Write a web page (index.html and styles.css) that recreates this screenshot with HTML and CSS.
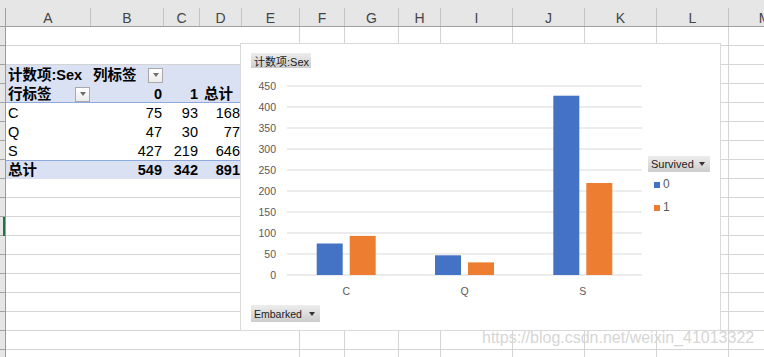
FILE: index.html
```html
<html>
	<head>
		<title>数据透视表 - Embarked / Survived</title>
		<meta charset="utf-8">
		<link rel="stylesheet" href="styles.css">
	</head>
	<body>
		<div class="sheet">
			<div class="colhead">
				<div class="corner"></div>
				<div class="letter">A</div>
				<div class="letter">B</div>
				<div class="letter">C</div>
				<div class="letter">D</div>
				<div class="letter">E</div>
				<div class="letter">F</div>
				<div class="letter">G</div>
				<div class="letter">H</div>
				<div class="letter">I</div>
				<div class="letter">J</div>
				<div class="letter">K</div>
				<div class="letter">L</div>
				<div class="letter">M</div>
			</div>

			<div class="cells">
				<div class="rowhead"><span class="active"></span></div>
				<div class="col"></div>
				<div class="col"></div>
				<div class="col"></div>
				<div class="col"></div>
				<div class="col"></div>
				<div class="col"></div>
				<div class="col"></div>
				<div class="col"></div>
				<div class="col"></div>
				<div class="col"></div>
				<div class="col"></div>
				<div class="col"></div>
				<div class="col"></div>

				<table class="pivot">
					<colgroup>
						<col class="w-a">
						<col class="w-b">
						<col class="w-c">
						<col class="w-d">
					</colgroup>
					<tr class="head">
						<th>计数项:Sex</th>
						<th><div class="field">列标签<span class="drop"></span></div></th>
						<th></th>
						<th></th>
					</tr>
					<tr class="head sub">
						<th><div class="field">行标签<span class="drop"></span></div></th>
						<th class="num">0</th>
						<th class="num">1</th>
						<th class="grand">总计</th>
					</tr>
					<tr>
						<td>C</td>
						<td class="num">75</td>
						<td class="num">93</td>
						<td class="num">168</td>
					</tr>
					<tr>
						<td>Q</td>
						<td class="num">47</td>
						<td class="num">30</td>
						<td class="num">77</td>
					</tr>
					<tr>
						<td>S</td>
						<td class="num">427</td>
						<td class="num">219</td>
						<td class="num">646</td>
					</tr>
					<tr class="total">
						<td>总计</td>
						<td class="num">549</td>
						<td class="num">342</td>
						<td class="num">891</td>
					</tr>
				</table>
			</div>

			<!-- pivot chart floats over the cells -->
			<div class="chart">
				<div class="chip title">计数项:Sex</div>
				<div class="plot-row">
					<svg class="plot" viewBox="0 0 407 228">
						<g class="gridlines">
							<line x1="46" x2="401" y1="12" y2="12" />
							<line x1="46" x2="401" y1="33" y2="33" />
							<line x1="46" x2="401" y1="54" y2="54" />
							<line x1="46" x2="401" y1="75" y2="75" />
							<line x1="46" x2="401" y1="96" y2="96" />
							<line x1="46" x2="401" y1="117" y2="117" />
							<line x1="46" x2="401" y1="138" y2="138" />
							<line x1="46" x2="401" y1="159" y2="159" />
							<line x1="46" x2="401" y1="180" y2="180" />
							<line x1="46" x2="401" y1="201" y2="201" />
						</g>
						<g class="ylabels">
							<text x="35" y="16">450</text>
							<text x="35" y="37">400</text>
							<text x="35" y="58">350</text>
							<text x="35" y="79">300</text>
							<text x="35" y="100">250</text>
							<text x="35" y="121">200</text>
							<text x="35" y="142">150</text>
							<text x="35" y="163">100</text>
							<text x="35" y="184">50</text>
							<text x="35" y="205">0</text>
						</g>
						<g class="bars">
							<rect class="s0" x="75.7" y="169.5" width="26" height="31.5" />
							<rect class="s1" x="108.7" y="161.9" width="26" height="39.1" />
							<rect class="s0" x="194" y="181.3" width="26" height="19.7" />
							<rect class="s1" x="227" y="188.4" width="26" height="12.6" />
							<rect class="s0" x="312.3" y="21.7" width="26" height="179.3" />
							<rect class="s1" x="345.3" y="109" width="26" height="92" />
						</g>
						<g class="xlabels">
							<text x="105.2" y="221">C</text>
							<text x="223.5" y="221">Q</text>
							<text x="341.8" y="221">S</text>
						</g>
					</svg>
					<div class="legend">
						<div class="chip series">Survived<span class="caret"></span></div>
						<div class="key"><span class="swatch s0"></span>0</div>
						<div class="key"><span class="swatch s1"></span>1</div>
					</div>
				</div>
				<div class="chip axis">Embarked<span class="caret"></span></div>
			</div>

			<div class="watermark">https://blog.csdn.net/weixin_41013322</div>
		</div>
	</body>
</html>
```

FILE: styles.css
```css
html, body {
	margin: 0;
	overflow: hidden;
	background: #fff;
}

.sheet {
	position: relative;
	width: 764px;
	height: 357px;
	overflow: hidden;
	font-family: "Liberation Sans", "Noto Sans CJK SC", sans-serif;
}

.colhead,
.cells {
	display: grid;
	grid-template-columns: 6px 85px 73px 36px 42px 58px 45px 54px 42px 72px 72px 72px 72px 72px;
}

/* column letters */

.colhead {
	height: 27px;
	box-sizing: border-box;
	background: #e6e6e6;
	border-bottom: 1px solid #a0a0a0;
}

.corner {
	align-self: end;
	height: 18px;
	border-right: 1px solid #a0a0a0;
}

.letter {
	align-self: end;
	height: 18px;
	line-height: 20px;
	box-sizing: border-box;
	border-right: 1px solid #c4c4c4;
	text-align: center;
	font-size: 14px;
	color: #444;
	overflow: hidden;
}

/* cell area */

.cells {
	grid-template-rows: repeat(18, 19px);
	background: repeating-linear-gradient(to bottom, #fff 0 18px, #d4d4d4 18px 19px);
}

.rowhead {
	grid-column: 1;
	grid-row: 1 / -1;
	display: flex;
	flex-direction: column;
	box-sizing: border-box;
	border-right: 1px solid #9b9b9b;
	background: repeating-linear-gradient(to bottom, #e6e6e6 0 18px, #a3a3a3 18px 19px);
}

.active {
	align-self: flex-end;
	width: 2px;
	height: 19px;
	margin-top: 190px;
	background: #217346;
}

.col {
	grid-row: 1 / -1;
	box-sizing: border-box;
	border-right: 1px solid #d4d4d4;
}

/* pivot table */

.pivot {
	grid-column: 2 / 6;
	grid-row: 3 / 9;
	width: 100%;
	border-spacing: 0;
	table-layout: fixed;
	background: #fff;
	font-size: 14.5px;
	line-height: 17px;
	color: #000;
}

.w-a { width: 85px; }
.w-b { width: 73px; }
.w-c { width: 36px; }
.w-d { width: 42px; }

.pivot th,
.pivot td {
	height: 19px;
	padding: 2px 2px 0;
	text-align: left;
	font-weight: normal;
	white-space: nowrap;
}

.pivot .head th {
	background: #d9e1f2;
	font-weight: bold;
}

.pivot .sub th {
	box-shadow: inset 0 -1px #8ea9db;
}

.pivot .num {
	text-align: right;
}

.pivot .grand {
	padding-left: 4px;
}

.pivot .total td {
	background: #d9e1f2;
	box-shadow: inset 0 1px #8ea9db;
	font-weight: bold;
}

.field {
	display: flex;
	align-items: center;
	justify-content: space-between;
}

.drop {
	display: flex;
	align-items: center;
	justify-content: center;
	width: 15px;
	height: 15px;
	box-sizing: border-box;
	margin: -1px -1px 0 0;
	border: 1px solid #a9a9a9;
	background: linear-gradient(#fff, #ebebeb);
}

.drop::after {
	content: "";
	border-top: 4px solid #6e6e6e;
	border-left: 3.5px solid transparent;
	border-right: 3.5px solid transparent;
}

/* chart */

.chart {
	position: absolute;
	left: 240px;
	top: 43px;
	width: 481px;
	height: 288px;
	box-sizing: border-box;
	border: 1px solid #d9d9d9;
	background: #fff;
}

.chip {
	display: flex;
	align-items: center;
	justify-content: space-between;
	box-sizing: border-box;
	height: 16px;
	padding: 0 5px 0 3px;
	background: linear-gradient(#ededed, #cdcdcd);
	font-size: 11px;
	color: #1c1c1c;
	white-space: nowrap;
}

.chip.title {
	width: 60px;
	height: 15px;
	margin: 9px 0 0 10px;
}

.chip.series {
	width: 62px;
}

.chip.axis {
	width: 69px;
	height: 17px;
	margin: 3px 0 0 10px;
	font-size: 10.5px;
}

.caret {
	border-top: 4px solid #333;
	border-left: 3.5px solid transparent;
	border-right: 3.5px solid transparent;
}

.plot-row {
	display: flex;
	margin-top: 6px;
}

.plot {
	display: block;
	width: 407px;
	height: 228px;
}

.gridlines line {
	stroke: #d9d9d9;
	stroke-width: 1;
}

.ylabels text,
.xlabels text {
	font-size: 10.5px;
	fill: #595959;
}

.ylabels text {
	text-anchor: end;
}

.xlabels text {
	text-anchor: middle;
}

.s0 {
	fill: #4472c4;
	background: #4472c4;
}

.s1 {
	fill: #ed7d31;
	background: #ed7d31;
}

.legend {
	margin-top: 82px;
}

.key {
	display: flex;
	align-items: center;
	gap: 3px;
	margin: 5px 0 0 6px;
	font-size: 12px;
	line-height: 15px;
	color: #595959;
}

.key + .key {
	margin-top: 8px;
}

.swatch {
	width: 6px;
	height: 6px;
}

.watermark {
	position: absolute;
	left: 482px;
	top: 329px;
	font-size: 16px;
	line-height: 18px;
	color: #d6d6d6;
	white-space: nowrap;
}
```
